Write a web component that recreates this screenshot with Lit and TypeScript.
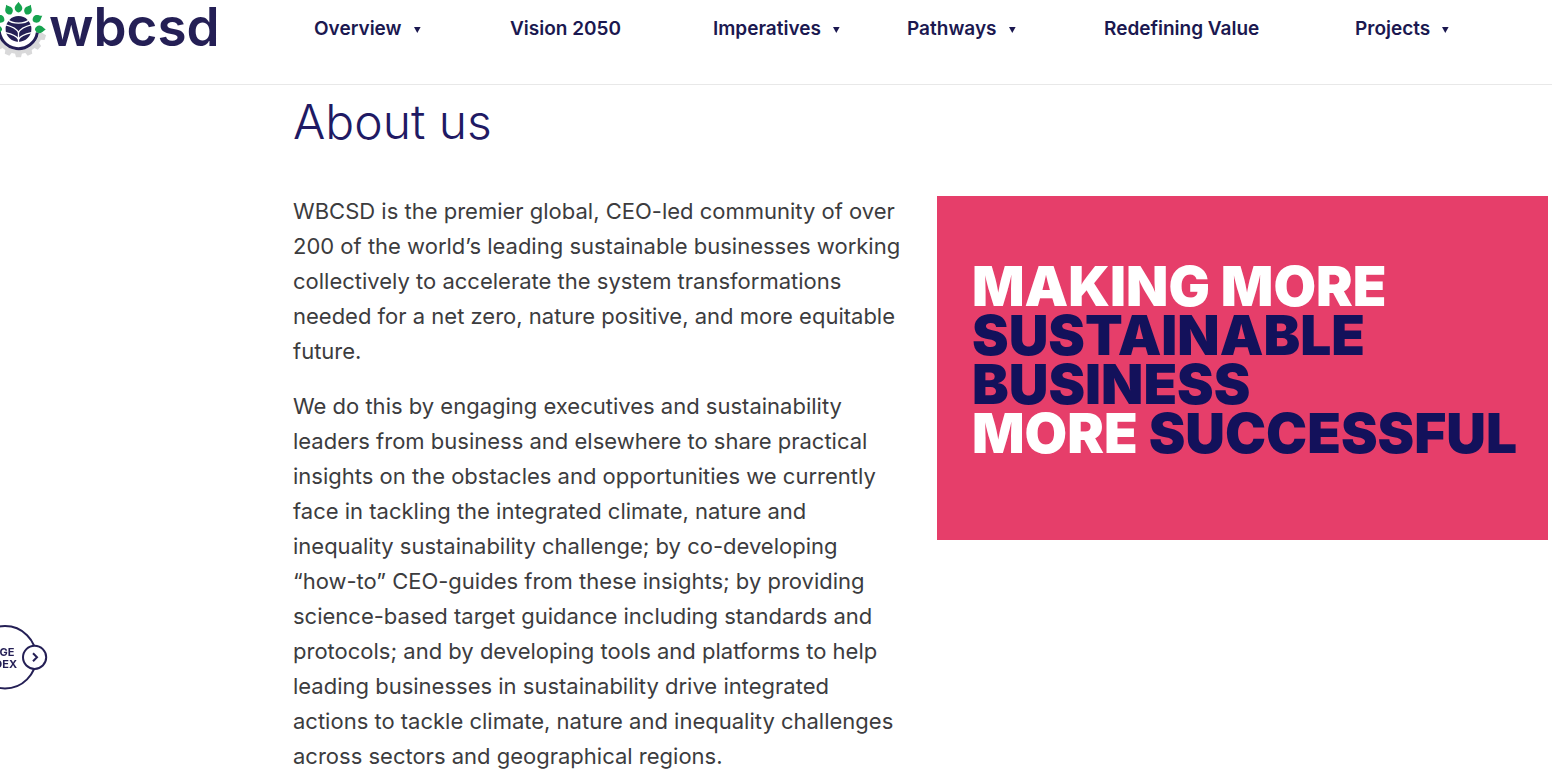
import { LitElement, html, css, svg } from "lit";
import { customElement } from "lit/decorators.js";

interface NavItem {
  label: string;
  menu: boolean;
}

const NAV: NavItem[] = [
  { label: "Overview", menu: true },
  { label: "Vision 2050", menu: false },
  { label: "Imperatives", menu: true },
  { label: "Pathways", menu: true },
  { label: "Redefining Value", menu: false },
  { label: "Projects", menu: true },
];

const LEAF_ANGLES = [-91, -61, -27, 0, 27, 61, 91];
const TOOTH_ANGLES = [108, 132, 156, 180, 204, 228, 252];

@customElement("site-header")
export class SiteHeader extends LitElement {
  static styles = css`
    :host {
      display: block;
      border-bottom: 1px solid #e8e8e8;
    }
    .bar {
      display: grid;
      grid-template-columns: 314px 1fr;
      height: 84px;
      align-items: start;
    }
    .brand {
      display: flex;
      align-items: start;
      gap: 3px;
      color: #241f55;
      text-decoration: none;
      justify-self: start;
    }
    .wordmark {
      font-size: 53px;
      line-height: 54px;
      font-weight: 600;
    }
    .nav {
      display: grid;
      grid-template-columns: 196fr 203fr 194fr 197fr 251fr 197fr;
    }
    .item {
      display: flex;
      align-items: center;
      justify-self: start;
      gap: 12px;
      border: 0;
      padding: 0;
      background: none;
      color: #1b1850;
      font-family: inherit;
      font-size: 19px;
      line-height: 58px;
      font-weight: 600;
      white-space: nowrap;
      text-decoration: none;
      cursor: pointer;
    }
    .caret {
      margin-top: 2px;
    }
  `;

  render() {
    return html`
      <header class="bar">
        <a class="brand" href="#home">
          <svg width="46" height="58" viewBox="0 0 46 58" aria-hidden="true">
            <g transform="translate(18.5 29)">
              <path d="M-24.4 4 A24.7 24.7 0 0 0 24.4 4 L20 4 A20.4 20.4 0 0 1 -20 4Z" fill="#d9d9da" />
              ${TOOTH_ANGLES.map(
                (a) => svg`<path transform="rotate(${a})" d="M-3.6 -24 L-2.5 -28.2 H2.5 L3.6 -24Z" fill="#d9d9da" />`
              )}
              <circle r="21.2" fill="#fff" />
              <path d="M-19.2 -1 A19.2 19.2 0 0 0 18.9 3.5" fill="none" stroke="#241f55" stroke-width="3" />
              ${LEAF_ANGLES.map(
                (a) => svg`<path transform="rotate(${a})" d="M0 -27.3 C1 -25 3.9 -23.6 3.8 -20.8 C3.7 -18.6 2 -16.8 0 -16.4 C-2 -16.8 -3.7 -18.6 -3.8 -20.8 C-3.9 -23.6 -1 -25 0 -27.3Z" fill="#16a34f" />`
              )}
              <circle r="12.9" fill="#241f55" />
              <g fill="none" stroke="#fff" stroke-width="1.3">
                <path d="M-11 -9.5 C-6 -4.6 6 -4.6 11 -9.5" />
                <path d="M-13.5 -4.4 C-8 -3 -2 -1 0 3.6 C2 -1 8 -3 13.5 -4.4" />
                <path d="M-13 3.6 C-8 4.6 -2 6.4 0 10.4 C2 6.4 8 4.6 13 3.6" />
                <path d="M0 3 V13.5" />
              </g>
            </g>
          </svg>
          <span class="wordmark">wbcsd</span>
        </a>
        <nav class="nav" aria-label="Main">
          ${NAV.map((n) =>
            n.menu
              ? html`<button class="item" type="button" aria-haspopup="true">
                  ${n.label}
                  <svg class="caret" width="7" height="6" viewBox="0 0 7 6" aria-hidden="true">
                    <path d="M0 0H6.6L3.3 6Z" fill="#1b1850" />
                  </svg>
                </button>`
              : html`<a class="item" href="#${n.label.toLowerCase().replace(" ", "-")}">${n.label}</a>`
          )}
        </nav>
      </header>
    `;
  }
}

@customElement("page-index-tab")
export class PageIndexTab extends LitElement {
  static styles = css`
    :host {
      position: fixed;
      left: -28px;
      top: 625px;
    }
    .tab {
      display: grid;
      align-items: center;
      width: 76px;
      height: 66px;
      border: 0;
      padding: 0;
      background: none;
      color: #241f55;
      font-family: inherit;
      cursor: pointer;
    }
    .ring,
    .label {
      grid-area: 1 / 1;
    }
    .label {
      width: 56px;
      font-size: 11px;
      line-height: 12px;
      font-weight: 700;
      text-align: center;
    }
  `;

  render() {
    return html`
      <button class="tab" type="button">
        <svg class="ring" width="76" height="66" viewBox="0 0 76 66" fill="#fff" stroke="#241f55" stroke-width="2" aria-hidden="true">
          <circle cx="33" cy="32.3" r="31.2" />
          <circle cx="62.6" cy="32.3" r="11.6" />
          <path d="M61 28.3 L65 32.3 L61 36.3" fill="none" />
        </svg>
        <span class="label">PAGE<br />INDEX</span>
      </button>
    `;
  }
}

@customElement("app-root")
export class AppRoot extends LitElement {
  static styles = css`
    :host {
      display: block;
      background: #fff;
      font-family: Inter, "Liberation Sans", sans-serif;
    }
    .page {
      padding: 9px 4px 0 293px;
    }
    .title {
      margin: 0 0 44px;
      color: #1f1a64;
      font-size: 48px;
      line-height: 56px;
      font-weight: 300;
    }
    .columns {
      display: grid;
      grid-template-columns: 1fr 1fr;
      column-gap: 33px;
      align-items: start;
    }
    .copy {
      color: #3c3c3e;
      font-size: 22px;
      line-height: 35px;
    }
    .copy p {
      margin: 0;
    }
    .copy p + p {
      margin-top: 20px;
    }
    .banner {
      box-sizing: border-box;
      margin: 2px 0 0;
      min-height: 344px;
      padding: 66px 0 66px 35px;
      background: #e63e6a;
      color: #13115b;
      font-size: 55px;
      line-height: 49px;
      font-weight: 900;
      white-space: nowrap;
    }
    .light {
      color: #fff;
    }
  `;

  render() {
    return html`
      <site-header></site-header>
      <main class="page">
        <h1 class="title">About us</h1>
        <div class="columns">
          <div class="copy">
            <p>
              WBCSD is the premier global, CEO-led community of over 200 of the world’s leading
              sustainable businesses working collectively to accelerate the system transformations
              needed for a net zero, nature positive, and more equitable future.
            </p>
            <p>
              We do this by engaging executives and sustainability leaders from business and
              elsewhere to share practical insights on the obstacles and opportunities we currently
              face in tackling the integrated climate, nature and inequality sustainability
              challenge; by co-developing “how-to” CEO-guides from these insights; by providing
              science-based target guidance including standards and protocols; and by developing
              tools and platforms to help leading businesses in sustainability drive integrated
              actions to tackle climate, nature and inequality challenges across sectors and
              geographical regions.
            </p>
          </div>
          <div class="banner">
            <span class="light">MAKING MORE</span><br />
            SUSTAINABLE<br />
            BUSINESS<br />
            <span class="light">MORE</span> SUCCESSFUL
          </div>
        </div>
      </main>
      <page-index-tab></page-index-tab>
    `;
  }
}
